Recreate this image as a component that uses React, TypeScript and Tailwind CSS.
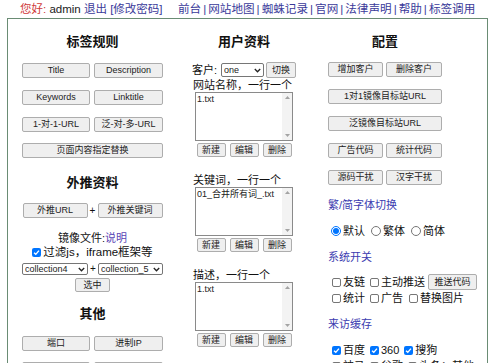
import React from "react";

type C = { children?: React.ReactNode };

const Btn = ({ children, w, h = "h-[15px]" }: C & { w: string; h?: string }) => (
  <div
    className={`${w} ${h} flex items-center justify-center border border-[#adadad] bg-[#efefef] rounded-[2px] text-[9px] leading-none text-[#222] whitespace-nowrap shrink-0`}
  >
    {children}
  </div>
);

const H = ({ children }: C) => (
  <div className="h-[16px] text-[13px] leading-[16px] font-bold text-center text-[#111] whitespace-nowrap">
    {children}
  </div>
);

const Cb = ({ checked }: { checked?: boolean }) =>
  checked ? (
    <span className="w-[9px] h-[9px] rounded-[2px] bg-[#0075ff] flex items-center justify-center shrink-0">
      <svg width="7" height="7" viewBox="0 0 8 8">
        <path d="M1.2 4.2 L3.2 6.1 L6.8 1.8" stroke="white" strokeWidth="1.6" fill="none" />
      </svg>
    </span>
  ) : (
    <span className="w-[9px] h-[9px] rounded-[2px] border border-[#767676] bg-white shrink-0" />
  );

const Radio = ({ checked }: { checked?: boolean }) =>
  checked ? (
    <span className="w-[10px] h-[10px] rounded-full border border-[#0075ff] bg-white flex items-center justify-center shrink-0">
      <span className="w-[6px] h-[6px] rounded-full bg-[#0075ff]" />
    </span>
  ) : (
    <span className="w-[10px] h-[10px] rounded-full border border-[#767676] bg-white shrink-0" />
  );

const Sel = ({ text, w, h = "h-[12px]" }: { text: string; w: string; h?: string }) => (
  <div
    className={`${w} ${h} border border-[#767676] rounded-[2px] bg-white flex items-center justify-between pl-[2px] pr-[2px] text-[9px] leading-none text-[#222] shrink-0`}
  >
    <span className="whitespace-nowrap overflow-hidden">{text}</span>
    <svg width="7" height="5" viewBox="0 0 7 5" className="shrink-0">
      <path d="M0.8 1 L3.5 3.8 L6.2 1" stroke="#222" strokeWidth="1.3" fill="none" />
    </svg>
  </div>
);

const Ta = ({ text }: { text: string }) => (
  <div className="w-[98px] h-[49px] border border-[#8a8a8a] bg-white flex">
    <div className="flex-1 text-[9px] leading-[11px] pl-[1px] pt-[1px] text-[#222] whitespace-nowrap overflow-hidden">
      {text}
    </div>
    <div className="w-[10px] bg-[#f3f3f3] flex flex-col items-center justify-between py-[3px]">
      <svg width="5" height="3" viewBox="0 0 5 3">
        <path d="M0 3 L2.5 0 L5 3 Z" fill="#a3a3a3" />
      </svg>
      <svg width="5" height="3" viewBox="0 0 5 3">
        <path d="M0 0 L2.5 3 L5 0 Z" fill="#a3a3a3" />
      </svg>
    </div>
  </div>
);

const TaBlock = ({ label, text, first }: { label: string; text: string; first?: boolean }) => (
  <div className={`${first ? "mt-[1px]" : "mt-[17px]"} w-[100px] flex flex-col items-center`}>
    <div className="self-start -ml-[1px] h-[13px] text-[11px] leading-[13px] text-[#111] whitespace-nowrap">
      {label}
    </div>
    <Ta text={text} />
    <div className="mt-[2px] flex gap-[4px]">
      <Btn w="w-[29px]" h="h-[14px]">新建</Btn>
      <Btn w="w-[29px]" h="h-[14px]">编辑</Btn>
      <Btn w="w-[29px]" h="h-[14px]">删除</Btn>
    </div>
  </div>
);

const Blue = ({ children, mt }: C & { mt: string }) => (
  <div className={`${mt} h-[12px] text-[11px] leading-[12px] text-[#3b3bb0] whitespace-nowrap`}>{children}</div>
);

const Lbl = ({ children }: C) => (
  <span className="ml-[2px] text-[11px] leading-[12px] text-[#111] whitespace-nowrap">{children}</span>
);

export default function App() {
  const sep = <span className="mx-[2px]">|</span>;
  return (
    <div className="w-[500px] h-[363px] overflow-hidden bg-white [font-family:'Liberation_Sans','Noto_Sans_CJK_SC',sans-serif] text-[#111]">
      <div className="h-[18px] flex items-center pl-[20px] leading-[14px] whitespace-nowrap">
        <div className="w-[158px] shrink-0 text-[11.5px]">
          <span className="text-[#d03a3a]">您好:</span> <span className="text-[#222]">admin</span>{" "}
          <span className="text-[#3a3a9a]">退出</span> <span className="text-[#3a3a9a]">[修改密码]</span>
        </div>
        <div className="text-[#3a3a9a] text-[11.6px]">
          前台{sep}网站地图{sep}蜘蛛记录{sep}官网{sep}法律声明{sep}帮助{sep}标签调用
        </div>
      </div>

      <div className="ml-[7px] w-[481px] h-[400px] border border-[#6a8c74] grid grid-cols-[169px_134px_1fr]">
        {/* Left column */}
        <div className="flex flex-col items-center pt-[15px]">
          <H>标签规则</H>
          <div className="mt-[13px] flex gap-[4px]">
            <Btn w="w-[68px]">Title</Btn>
            <Btn w="w-[69px]">Description</Btn>
          </div>
          <div className="mt-[12px] flex gap-[4px]">
            <Btn w="w-[68px]">Keywords</Btn>
            <Btn w="w-[69px]">Linktitle</Btn>
          </div>
          <div className="mt-[12px] flex gap-[4px]">
            <Btn w="w-[68px]">1-对-1-URL</Btn>
            <Btn w="w-[69px]">泛-对-多-URL</Btn>
          </div>
          <div className="mt-[11px]">
            <Btn w="w-[141px]">页面内容指定替换</Btn>
          </div>

          <div className="mt-[17px]">
            <H>外推资料</H>
          </div>
          <div className="mt-[12px] flex items-center">
            <Btn w="w-[65px]">外推URL</Btn>
            <span className="w-[10px] text-center text-[10px] leading-none">+</span>
            <Btn w="w-[65px]">外推关键词</Btn>
          </div>
          <div className="mt-[13px] h-[14px] text-[11px] leading-[14px] whitespace-nowrap">
            镜像文件:<span className="text-[#5a45b5]">说明</span>
          </div>
          <div className="h-[14px] flex items-center">
            <Cb checked />
            <span className="ml-[2px] text-[11.5px] leading-[14px] whitespace-nowrap">过滤js，iframe框架等</span>
          </div>
          <div className="mt-[4px] flex items-center">
            <Sel text="collection4" w="w-[66px]" />
            <span className="w-[10px] text-center text-[10px] leading-none">+</span>
            <Sel text="collection_5" w="w-[65px]" />
          </div>
          <div className="mt-[3px]">
            <Btn w="w-[35px]" h="h-[14px]">选中</Btn>
          </div>

          <div className="mt-[14px]">
            <H>其他</H>
          </div>
          <div className="mt-[14px] flex gap-[4px]">
            <Btn w="w-[68px]">端口</Btn>
            <Btn w="w-[69px]">进制IP</Btn>
          </div>
          <div className="mt-[11px] flex gap-[4px]">
            <Btn w="w-[68px]">模板</Btn>
            <Btn w="w-[69px]">缓存</Btn>
          </div>
        </div>

        {/* Middle column */}
        <div className="flex flex-col items-center pt-[15px]">
          <H>用户资料</H>
          <div className="mt-[12px] h-[16px] flex items-center">
            <span className="text-[11px] leading-[13px] whitespace-nowrap">客户:</span>
            <div className="ml-[4px]">
              <Sel text="one" w="w-[43px]" h="h-[14px]" />
            </div>
            <div className="ml-[2px]">
              <Btn w="w-[30px]" h="h-[16px]">切换</Btn>
            </div>
          </div>
          <TaBlock first label="网站名称，一行一个" text="1.txt" />
          <TaBlock label="关键词，一行一个" text="01_合并所有词_.txt" />
          <TaBlock label="描述，一行一个" text="1.txt" />
        </div>

        {/* Right column */}
        <div className="pl-[17px] pt-[15px] flex flex-col items-start">
          <div className="w-[114px]">
            <H>配置</H>
          </div>
          <div className="mt-[12px] flex gap-[3px]">
            <Btn w="w-[55px]">增加客户</Btn>
            <Btn w="w-[56px]">删除客户</Btn>
          </div>
          <div className="mt-[12px]">
            <Btn w="w-[114px]">1对1镜像目标站URL</Btn>
          </div>
          <div className="mt-[12px]">
            <Btn w="w-[114px]">泛镜像目标站URL</Btn>
          </div>
          <div className="mt-[12px] flex gap-[3px]">
            <Btn w="w-[55px]">广告代码</Btn>
            <Btn w="w-[56px]">统计代码</Btn>
          </div>
          <div className="mt-[12px] flex gap-[3px]">
            <Btn w="w-[55px]">源码干扰</Btn>
            <Btn w="w-[56px]">汉字干扰</Btn>
          </div>

          <Blue mt="mt-[14px]">繁/简字体切换</Blue>
          <div className="mt-[14px] h-[12px] flex items-center pl-[3px]">
            <Radio checked />
            <Lbl>默认</Lbl>
            <span className="ml-[6px]" />
            <Radio />
            <Lbl>繁体</Lbl>
            <span className="ml-[6px]" />
            <Radio />
            <Lbl>简体</Lbl>
          </div>

          <Blue mt="mt-[14px]">系统开关</Blue>
          <div className="mt-[11px] h-[16px] flex items-center pl-[4px]">
            <Cb />
            <Lbl>友链</Lbl>
            <span className="ml-[5px]" />
            <Cb />
            <Lbl>主动推送</Lbl>
            <div className="ml-[3px]">
              <Btn w="w-[49px]" h="h-[16px]">推送代码</Btn>
            </div>
          </div>
          <div className="mt-[2px] h-[12px] flex items-center pl-[4px]">
            <Cb />
            <Lbl>统计</Lbl>
            <span className="ml-[5px]" />
            <Cb />
            <Lbl>广告</Lbl>
            <span className="ml-[6px]" />
            <Cb />
            <Lbl>替换图片</Lbl>
          </div>

          <Blue mt="mt-[14px]">来访缓存</Blue>
          <div className="mt-[14px] h-[12px] flex items-center pl-[4px]">
            <Cb checked />
            <Lbl>百度</Lbl>
            <span className="ml-[5px]" />
            <Cb checked />
            <Lbl>360</Lbl>
            <span className="ml-[5px]" />
            <Cb checked />
            <Lbl>搜狗</Lbl>
          </div>
          <div className="mt-[4px] h-[12px] flex items-center pl-[4px]">
            <Cb />
            <Lbl>神马</Lbl>
            <span className="ml-[5px]" />
            <Cb />
            <Lbl>谷歌</Lbl>
            <span className="ml-[5px]" />
            <Cb />
            <Lbl>头条：其他</Lbl>
          </div>
        </div>
      </div>
    </div>
  );
}
